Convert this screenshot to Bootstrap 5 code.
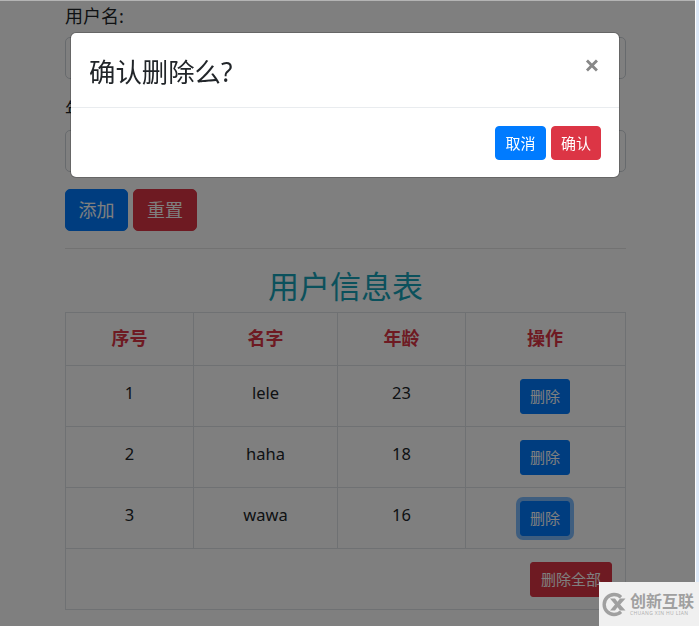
<!DOCTYPE html>
<html lang="zh">
<head>
<meta charset="utf-8">
<title>用户信息表</title>
<link rel="stylesheet" href="https://cdn.jsdelivr.net/npm/bootstrap@5.3.0/dist/css/bootstrap.min.css">
<style>
html,body{height:100%;overflow:hidden}
body{font-family:"Noto Sans","Noto Sans CJK SC",sans-serif;background:#fff;color:#212529;font-size:18px;line-height:27px}
.page-wrap{width:561px;margin-left:65px;padding-top:2px}
.field-block{margin-bottom:16px}
.field-label{display:block;margin-bottom:8px;height:27px;line-height:29px}
.field-input{height:42px;border:1px solid #ced4da;border-radius:5px;font-size:18px}
.act-row{gap:5px;margin-top:17px}
.act-btn{font-size:18px;height:42px;padding:0;width:63px;border-radius:5px;line-height:40px}
.act-wide{width:64px}
.blue-btn{background:#007bff;border-color:#007bff;color:#fff}
.red-btn{background:#dc3545;border-color:#dc3545;color:#fff}
.page-rule{margin:17px 0 16px;border-top:1px solid #000;opacity:.1}
.table-title{font-size:31px;line-height:43px;color:#17a2b8;text-align:center;margin:0;height:47px;font-weight:400}
.user-table{table-layout:fixed;width:560px;margin:0;border-color:#dee2e6}
.user-table th,.user-table td{text-align:center;border:1px solid #dee2e6;padding:13px 12px 12px;font-size:16.5px;line-height:27px;vertical-align:top;color:#212529}
.user-table th{color:#dc3545;height:53px;font-weight:700;font-size:18px;padding-top:12px}
.user-table td{height:61px}
.user-table .op-cell{padding-right:13px}
.user-table .end-cell{text-align:right}
.del-btn{font-size:15px;height:35px;width:50px;padding:0;border-radius:3px;line-height:33px}
.ring-btn{box-shadow:0 0 0 4px rgba(0,123,255,.5)}
.all-btn{width:82px;height:35px;font-size:15px;padding:0;border-radius:3px;line-height:33px;margin-right:1px}
.topline{position:fixed;left:0;right:0;top:0;height:1px;background:#b4b4b4;z-index:1200}
.screen-edge{position:fixed;top:0;bottom:0;right:0;width:4px;background:#dce8f7;border-left:1px solid #fff;z-index:1200}
.shot-modal{--bs-modal-width:550px}
.shot-dialog{margin:32px 0 0 70px;width:550px;max-width:550px}
.shot-content{border-radius:6px;border:1px solid rgba(0,0,0,.2);height:146px}
.shot-header{height:75px;padding:19px 18px 14px;border-bottom:1px solid #e9ecef;align-items:center}
.shot-title{font-size:26.4px;line-height:39px;font-weight:400;margin:0;color:#212529}
.shot-close{font-size:27px;font-weight:700;line-height:1;color:#888;background:none;border:0;padding:0;margin-top:-16px;margin-right:-1px;width:20px}
.shot-footer{padding:18px 18px 16px;gap:5px}
.foot-btn{font-size:15px;height:34px;width:51px;padding:0;border-radius:4px;line-height:32px}
.foot-narrow{width:50px}
.mark-box{position:fixed;right:0;bottom:0;width:100px;height:44px;background:#f0f0f0;z-index:1300;display:flex;align-items:center;padding-left:3px;gap:3px}
.mark-cn{font-size:16px;line-height:17px;color:#a0a0a0;font-weight:700;letter-spacing:0;white-space:nowrap}
.mark-en{font-size:5px;line-height:6px;color:#b0b0b0;white-space:nowrap;letter-spacing:.35px}
</style>
</head>
<body>
<div class="page-wrap">
  <form>
    <div class="field-block">
      <label class="field-label">用户名:</label>
      <input class="form-control field-input" type="text">
    </div>
    <div>
      <label class="field-label">年龄:</label>
      <input class="form-control field-input" type="text">
    </div>
    <div class="d-flex act-row">
      <button type="button" class="btn act-btn blue-btn">添加</button>
      <button type="button" class="btn act-btn act-wide red-btn">重置</button>
    </div>
  </form>
  <hr class="page-rule">
  <h2 class="table-title">用户信息表</h2>
  <table class="table user-table">
    <colgroup><col style="width:128px"><col style="width:144px"><col style="width:128px"><col style="width:160px"></colgroup>
    <thead><tr><th>序号</th><th>名字</th><th>年龄</th><th class="op-cell">操作</th></tr></thead>
    <tbody>
      <tr><td>1</td><td>lele</td><td>23</td><td class="op-cell"><button type="button" class="btn del-btn blue-btn">删除</button></td></tr>
      <tr><td>2</td><td>haha</td><td>18</td><td class="op-cell"><button type="button" class="btn del-btn blue-btn">删除</button></td></tr>
      <tr><td>3</td><td>wawa</td><td>16</td><td class="op-cell"><button type="button" class="btn del-btn blue-btn ring-btn">删除</button></td></tr>
      <tr><td colspan="4" class="end-cell"><button type="button" class="btn all-btn red-btn">删除全部</button></td></tr>
    </tbody>
  </table>
</div>

<div class="modal-backdrop show"></div>
<div class="modal d-block shot-modal">
  <div class="modal-dialog shot-dialog">
    <div class="modal-content shot-content">
      <div class="modal-header shot-header">
        <h5 class="modal-title shot-title">确认删除么?</h5>
        <button type="button" class="shot-close ms-auto">×</button>
      </div>
      <div class="d-flex justify-content-end shot-footer">
        <button type="button" class="btn foot-btn blue-btn">取消</button>
        <button type="button" class="btn foot-btn foot-narrow red-btn">确认</button>
      </div>
    </div>
  </div>
</div>

<div class="topline"></div>
<div class="screen-edge"></div>
<div class="mark-box">
  <svg width="25" height="25" viewBox="0 0 25 25" aria-hidden="true">
    <path d="M19 5.2A10 10 0 1 0 19 19.8" fill="none" stroke="#a0a0a0" stroke-width="3.4"/>
    <path d="M8 6.5 13 12.5 8 18.5H13L15.5 15.2 18 18.5H23.5L18.2 12.5 23.5 6.5H18L15.5 9.8 13 6.5Z" fill="#a0a0a0"/>
  </svg>
  <div>
    <div class="mark-cn">创新互联</div>
    <div class="mark-en">CHUANG XIN HU LIAN</div>
  </div>
</div>
</body>
</html>
